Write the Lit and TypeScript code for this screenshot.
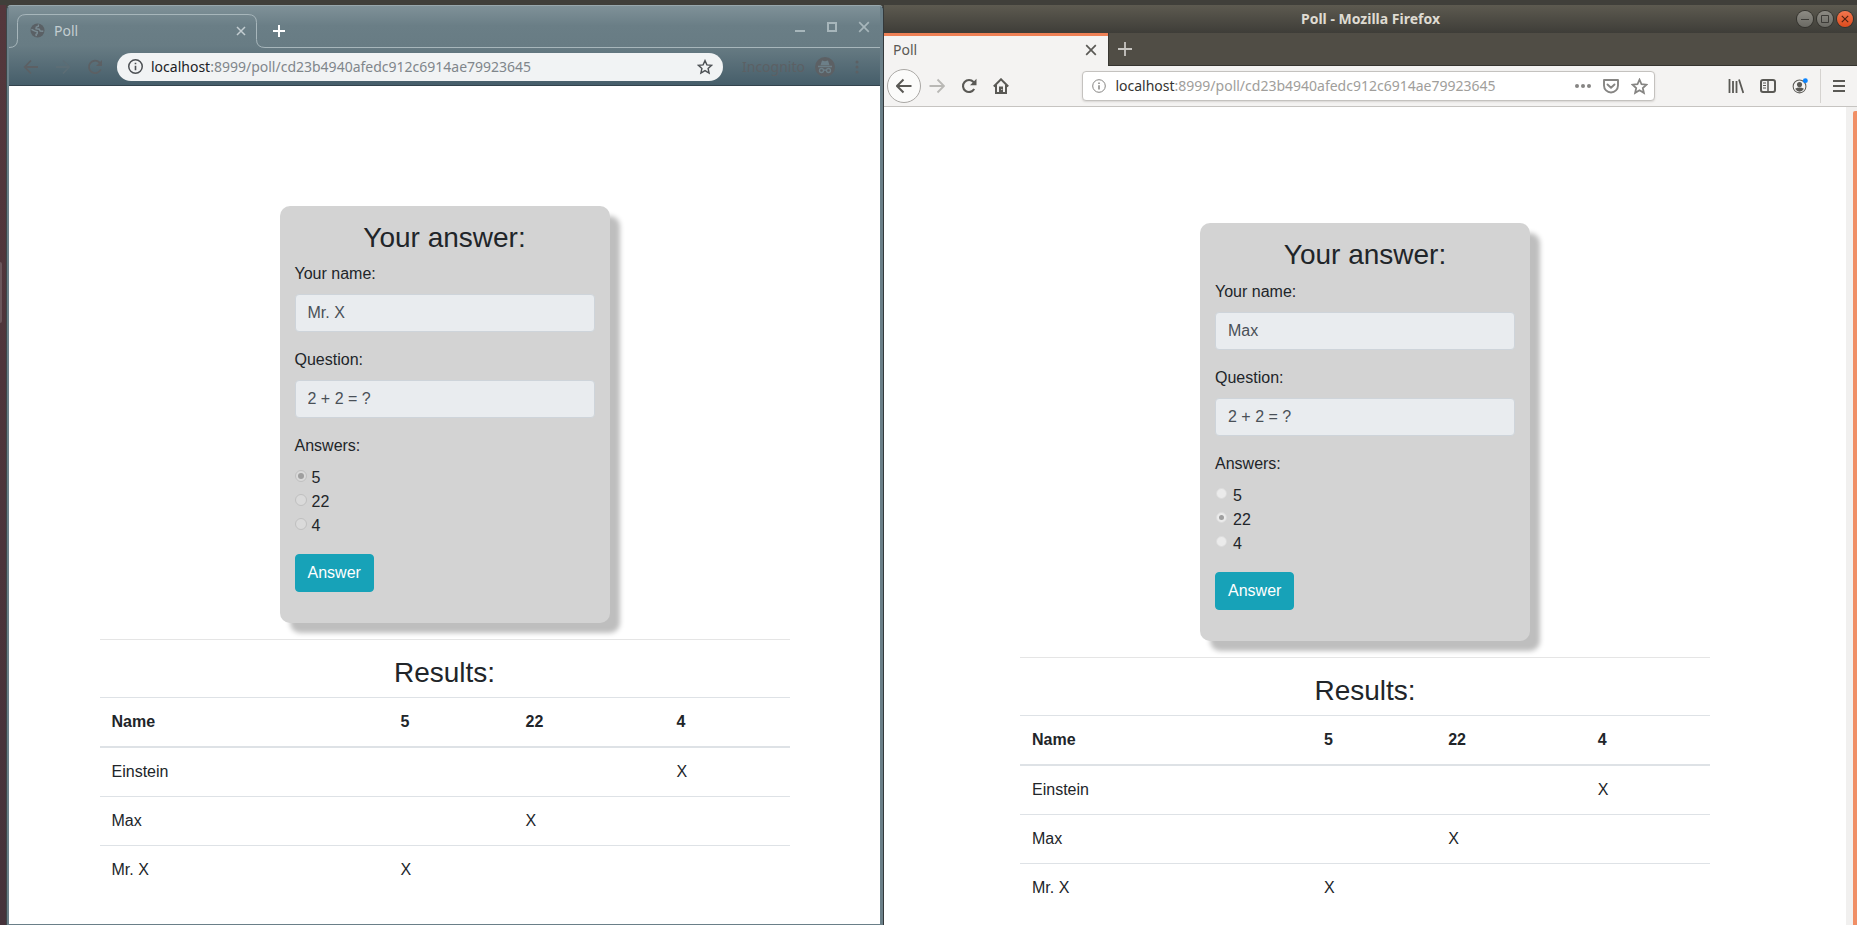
import { LitElement, html, css, svg } from "lit";
import { customElement, property } from "lit/decorators.js";

const ADDRESS_HOST = "localhost";
const ADDRESS_PATH = ":8999/poll/cd23b4940afedc912c6914ae79923645";
const OPTIONS = ["5", "22", "4"];
const RESULTS = [
  { name: "Einstein", pick: "4" },
  { name: "Max", pick: "22" },
  { name: "Mr. X", pick: "5" },
];

const icon = (size: number, box: string, body: unknown) => html`<svg
  width=${size}
  height=${size}
  viewBox=${box}
  fill="none"
  stroke="currentColor"
  aria-hidden="true"
>
  ${body}
</svg>`;

const crossIcon = (size: number, width: number) =>
  icon(size, "0 0 10 10", svg`<path d="M1 1l8 8M9 1l-8 8" stroke-width=${width} />`);

const starIcon = (size: number, width: number) =>
  icon(
    size,
    "0 0 16 16",
    svg`<path d="M8 1.600L9.900 5.900L14.600 6.300L11.100 9.400L12.100 14L8 11.600L3.900 14L4.900 9.400L1.400 6.300L6.100 5.900z" stroke-width=${width} />`
  );

const infoIcon = (size: number, width: number) =>
  icon(
    size,
    "0 0 14 14",
    svg`<circle cx="7" cy="7" r="6.3" stroke-width=${width} /><path d="M7 6.200v4.200M7 3.500v1.500" stroke-width="1.500" />`
  );

@customElement("poll-page")
export class PollPage extends LitElement {
  @property() person = "";
  @property() choice = "";

  static styles = css`
    * {
      box-sizing: border-box;
    }
    :host {
      display: block;
      padding: var(--page-top, 120px) 15px 0;
      background: #fff;
      color: #212529;
      font: 16px/24px "Liberation Sans", Arial, sans-serif;
    }
    .container {
      max-width: 690px;
      margin: 0 auto;
    }
    .card {
      width: 330px;
      margin: 0 auto;
      padding: 15px 15px 31px;
      border-radius: 10px;
      background: #d3d3d3;
      box-shadow: 10px 10px 5px #bebebe;
    }
    .title {
      margin: 0 0 8px;
      font-size: 28px;
      font-weight: 400;
      line-height: 33px;
      text-align: center;
    }
    .card .title {
      line-height: var(--title-line, 33px);
    }
    .group {
      margin: 0 0 16px;
      padding: 0;
      border: 0;
    }
    .caption {
      display: block;
      margin-bottom: 8px;
      padding: 0;
    }
    .field {
      display: block;
      width: 100%;
      height: 38px;
      padding: 6px 12px;
      border: 1px solid #ced4da;
      border-radius: 4px;
      background: #e9ecef;
      color: #495057;
      font: inherit;
    }
    .option {
      display: flex;
      gap: var(--radio-gap, 5px);
    }
    .radio {
      appearance: none;
      display: grid;
      place-items: center;
      width: var(--radio-size, 12px);
      height: var(--radio-size, 12px);
      margin: 4px 0 0 var(--radio-left, 0);
      border: 1px solid var(--radio-line, #c0c0c0);
      border-radius: 50%;
      background: var(--radio-fill, #dadada);
    }
    .radio:checked::before {
      content: "";
      width: var(--dot-size, 6px);
      height: var(--dot-size, 6px);
      border-radius: 50%;
      background: #9f9f9f;
    }
    .submit {
      display: block;
      height: 38px;
      padding: 6px 12px;
      border: 1px solid #17a2b8;
      border-radius: 4px;
      background: #17a2b8;
      color: #fff;
      font: inherit;
    }
    .rule {
      height: 1px;
      margin: 16px 0;
      border: 0;
      background: #e5e5e5;
    }
    .results {
      width: 100%;
      border-spacing: 0;
      text-align: left;
    }
    .cell {
      padding: 12px;
      border-top: 1px solid #dee2e6;
      font-weight: 400;
    }
    .head {
      padding: 12px;
      border-top: 1px solid #dee2e6;
      border-bottom: 2px solid #dee2e6;
      font-weight: 700;
    }
    .head:first-child {
      width: var(--name-column, 289px);
    }
    .first .cell {
      border-top: 0;
    }
  `;

  render() {
    return html`
      <main class="container">
        <form class="card" @submit=${(e: Event) => e.preventDefault()}>
          <h2 class="title">Your answer:</h2>
          <div class="group">
            <label class="caption" for="name">Your name:</label>
            <input class="field" id="name" type="text" .value=${this.person} disabled />
          </div>
          <div class="group">
            <label class="caption" for="question">Question:</label>
            <input class="field" id="question" type="text" .value=${"2 + 2 = ?"} disabled />
          </div>
          <fieldset class="group">
            <legend class="caption">Answers:</legend>
            ${OPTIONS.map(
              (o) => html`<label class="option">
                <input class="radio" type="radio" name="answer" value=${o} ?checked=${o === this.choice} disabled />
                <span>${o}</span>
              </label>`
            )}
          </fieldset>
          <button class="submit" type="submit">Answer</button>
        </form>
        <hr class="rule" />
        <h2 class="title">Results:</h2>
        <table class="results">
          <thead>
            <tr>
              <th class="head" scope="col">Name</th>
              ${OPTIONS.map((o) => html`<th class="head" scope="col">${o}</th>`)}
            </tr>
          </thead>
          <tbody>
            ${RESULTS.map(
              (r, i) => html`<tr class=${i === 0 ? "first" : ""}>
                <th class="cell" scope="row">${r.name}</th>
                ${OPTIONS.map((o) => html`<td class="cell">${o === r.pick ? "X" : ""}</td>`)}
              </tr>`
            )}
          </tbody>
        </table>
      </main>
    `;
  }
}

@customElement("incognito-window")
export class IncognitoWindow extends LitElement {
  static styles = css`
    * {
      box-sizing: border-box;
    }
    :host {
      display: flex;
      flex-direction: column;
      box-sizing: border-box;
      padding: 0 3px 1px 2px;
      border-top: 1px solid #98a7ac;
      border-left: 1px solid #3d4547;
      border-right: 1px solid #34393b;
      border-radius: 5px 5px 0 0;
      background: #6a7f88;
      font: 14px/20px "Noto Sans", sans-serif;
    }
    button {
      display: grid;
      place-items: center;
      padding: 0;
      border: 0;
      background: none;
      color: inherit;
    }
    svg {
      display: block;
    }
    .chrome {
      background: linear-gradient(#7f9198, #6a7e86 25%, #687c84 50%, #465e6a);
      border-bottom: 1px solid #33434d;
    }
    .strip {
      display: flex;
      align-items: flex-end;
      height: 42px;
      color: #a7b6bb;
    }
    .tab {
      display: flex;
      color: #c3cdd1;
      background: none;
    }
    .edge {
      color: #a7b6bb;
    }
    .face {
      display: flex;
      align-items: center;
      width: 222px;
      height: 34px;
      padding: 0 0 2px 4px;
      border-top: 1px solid #a7b6bb;
    }
    .globe {
      color: #5a6065;
    }
    .name {
      flex: 1;
      margin-left: 9px;
    }
    .close {
      width: 14px;
      height: 20px;
    }
    .rest {
      display: flex;
      flex: 1;
      align-items: center;
      height: 42px;
      padding-right: 10px;
      border-bottom: 1px solid #a7b6bb;
    }
    .plus {
      width: 28px;
      height: 28px;
      margin-top: 8px;
      color: #fff;
    }
    .controls {
      display: flex;
      gap: 20px;
      margin: 0 0 0 auto;
    }
    .controls button {
      width: 12px;
      height: 12px;
    }
    .toolbar {
      display: flex;
      align-items: center;
      height: 37px;
      padding: 0 17px 0 12px;
      color: #5c6064;
    }
    .nav {
      display: flex;
      gap: 12px;
      margin-right: 12px;
    }
    .nav button {
      width: 20px;
      height: 28px;
    }
    .nav .off {
      color: #5c6d75;
    }
    .address {
      display: flex;
      flex: 1;
      align-items: center;
      height: 28px;
      padding: 0 10px 0 11px;
      border-radius: 14px;
      background: #f1f3f4;
      color: #4c5054;
    }
    .url {
      flex: 1;
      margin-left: 8px;
      color: #80868b;
    }
    .host {
      color: #202124;
    }
    .mode {
      margin: 0 10px 0 19px;
    }
    .menu {
      width: 12px;
      height: 28px;
      margin-left: 16px;
    }
    .page {
      flex: 1;
      --page-top: 120px;
    }
  `;

  render() {
    return html`
      <header class="chrome">
        <div class="strip">
          <div class="tab">
            <svg class="edge" width="17" height="34" fill="none" stroke="currentColor" aria-hidden="true">
              <path d="M0 33.500Q8.500 33.500 8.500 25.500V8.500Q8.500 .5 17 .5" />
            </svg>
            <div class="face">
              <svg class="globe" width="15" height="15" viewBox="0 0 15 15" aria-hidden="true">
                <circle cx="7.500" cy="7.500" r="7" fill="currentColor" />
                <path d="M8.500 1.500L8.300 3.300L6.300 4L6 5.600L9.300 6.200L10.200 8L13.300 8.300M1.500 6.300L4.500 7.800L7.300 8.800L7.200 10.600L6 11.400L6.300 13.200" fill="none" stroke="#7a8c94" stroke-width="1.400" />
              </svg>
              <span class="name">Poll</span>
              <button class="close" aria-label="Close tab">${crossIcon(10, 1.5)}</button>
            </div>
            <svg class="edge" width="17" height="34" fill="none" stroke="currentColor" aria-hidden="true">
              <path d="M0 .5Q8.500 .5 8.500 8.500V25.500Q8.500 33.500 17 33.500" />
            </svg>
          </div>
          <div class="rest">
            <button class="plus" aria-label="New tab">
              ${icon(12, "0 0 12 12", svg`<path d="M6 0v12M0 6h12" stroke-width="2" />`)}
            </button>
            <div class="controls">
              <button aria-label="Minimize">${icon(12, "0 0 12 12", svg`<path d="M1 10h10" stroke-width="2" />`)}</button>
              <button aria-label="Maximize">${icon(12, "0 0 12 12", svg`<path d="M2 2h8v8H2z" stroke-width="2" />`)}</button>
              <button aria-label="Close">${crossIcon(12, 1.4)}</button>
            </div>
          </div>
        </div>
        <div class="toolbar">
          <nav class="nav">
            <button aria-label="Back">
              ${icon(16, "0 0 16 16", svg`<path d="M15 8H2M8 1.500L1.800 8 8 14.500" stroke-width="1.800" />`)}
            </button>
            <button class="off" aria-label="Forward">
              ${icon(16, "0 0 16 16", svg`<path d="M1 8h13M8 1.500L14.200 8 8 14.500" stroke-width="1.800" />`)}
            </button>
            <button aria-label="Reload">
              ${icon(16, "0 0 16 16", svg`<path d="M13.800 10.500A6.200 6.200 0 1 1 12.500 3.500L14.500 5.800" stroke-width="1.800" /><path d="M15 1v6H9z" fill="currentColor" stroke="none" />`)}
            </button>
          </nav>
          <div class="address">
            ${infoIcon(15, 1.4)}
            <span class="url" role="textbox" aria-label="Address" contenteditable="true"><span class="host">${ADDRESS_HOST}</span>${ADDRESS_PATH}</span>
            <button aria-label="Bookmark">${starIcon(16, 1.4)}</button>
          </div>
          <span class="mode">Incognito</span>
          <svg width="20" height="20" viewBox="0 0 20 20" aria-hidden="true">
            <circle cx="10" cy="10" r="10" fill="#5c6064" />
            <g fill="none" stroke="#6c7f88" stroke-width="1.300">
              <path d="M3 9.500h14M8.300 13.500q1.700-1 3.400 0" />
              <circle cx="6.500" cy="13.500" r="2" />
              <circle cx="13.500" cy="13.500" r="2" />
            </g>
            <path d="M5.500 8.300L7 3.500l3 .8 3-.8 1.500 4.800z" fill="#6c7f88" />
          </svg>
          <button class="menu" aria-label="Menu">
            <svg width="4" height="14" viewBox="0 0 4 14" fill="currentColor" aria-hidden="true">
              <circle cx="2" cy="2" r="1.500" /><circle cx="2" cy="7" r="1.500" /><circle cx="2" cy="12" r="1.500" />
            </svg>
          </button>
        </div>
      </header>
      <poll-page class="page" person="Mr. X" choice="5"></poll-page>
    `;
  }
}

@customElement("firefox-window")
export class FirefoxWindow extends LitElement {
  static styles = css`
    * {
      box-sizing: border-box;
    }
    :host {
      display: flex;
      flex-direction: column;
      background: #fff;
      color: #5a5955;
      font: 14px/20px "Noto Sans", sans-serif;
    }
    button {
      display: grid;
      place-items: center;
      flex: none;
      padding: 0;
      border: 0;
      background: none;
      color: inherit;
    }
    svg {
      display: block;
    }
    .titlebar {
      display: grid;
      grid-template-columns: 1fr auto 1fr;
      align-items: center;
      height: 28px;
      padding: 0 4px;
      background: linear-gradient(#5d5a50, #3e3d38);
      color: #dfdbd2;
    }
    .caption {
      grid-column: 2;
      font-size: 14px;
      font-weight: 700;
    }
    .controls {
      display: flex;
      justify-content: flex-end;
      gap: 4px;
    }
    .round {
      width: 16px;
      height: 16px;
      border-radius: 50%;
      background: linear-gradient(#8d8b84, #6b6a64);
      box-shadow: 0 0 0 1px #34332e;
      color: #3c3b37;
    }
    .round.quit {
      background: linear-gradient(#f3774f, #dd4b1d);
      color: #4d2212;
    }
    .strip {
      display: flex;
      height: 33px;
      background: #504d45;
    }
    .tab {
      display: flex;
      align-items: center;
      width: 224px;
      padding: 0 10px 2px 9px;
      border-top: 3px solid #ee8055;
      background: #f4f3f2;
    }
    .name {
      flex: 1;
    }
    .close {
      width: 14px;
      height: 20px;
    }
    .rest {
      display: flex;
      flex: 1;
      align-items: center;
      padding-left: 9px;
      border-left: 1px solid #3a3833;
      border-bottom: 1px solid #35342f;
      color: #c7c5c1;
    }
    .toolbar {
      display: flex;
      align-items: center;
      height: 41px;
      padding: 0 6px 0 3px;
      border-bottom: 1px solid #c6c4c1;
      background: #f4f3f2;
    }
    .nav {
      display: flex;
      align-items: center;
      gap: 8px;
    }
    .nav button {
      width: 24px;
      height: 32px;
    }
    .nav .back {
      width: 34px;
      height: 34px;
      border: 1px solid #aaa8a5;
      border-radius: 50%;
      background: #fbfbfa;
    }
    .nav .back + button {
      margin-left: -4px;
    }
    .nav .off {
      color: #b9b8b5;
    }
    .space {
      flex: 1;
    }
    .address {
      display: flex;
      flex: 8;
      align-items: center;
      gap: 12px;
      height: 30px;
      padding: 0 6px 0 9px;
      border: 1px solid #c4c2bf;
      border-radius: 4px;
      background: #fff;
      box-shadow: 0 1px 2px #d8d6d3;
      color: #868583;
    }
    .url {
      flex: 1;
      margin-left: -3px;
      color: #a09e9b;
    }
    .host {
      color: #343330;
    }
    .tools {
      display: flex;
      align-items: center;
      gap: 8px;
    }
    .tools button {
      width: 24px;
      height: 32px;
    }
    .divider {
      width: 1px;
      height: 34px;
      margin-right: -2px;
      background: #d5d3d0;
    }
    .view {
      display: flex;
      flex: 1;
    }
    .page {
      flex: 1;
      --page-top: 116px;
      --title-line: 34px;
      --radio-size: 11px;
      --radio-left: 1px;
      --radio-gap: 6px;
      --radio-line: #dcdcdc;
      --radio-fill: #ebebeb;
      --dot-size: 5px;
      --name-column: 292px;
    }
    .scrollbar {
      width: 11px;
      padding: 4px 0 0 7px;
      background: #f1f0ef;
    }
    .thumb {
      height: 100%;
      border-radius: 2px 0 0 0;
      background: #f08f66;
    }
  `;

  render() {
    return html`
      <div class="titlebar">
        <span class="caption">Poll - Mozilla Firefox</span>
        <div class="controls">
          <button class="round" aria-label="Minimize">${icon(10, "0 0 10 10", svg`<path d="M1 5.500h8" />`)}</button>
          <button class="round" aria-label="Maximize">${icon(10, "0 0 10 10", svg`<path d="M1.500 1.500h7v7h-7z" />`)}</button>
          <button class="round quit" aria-label="Close">${crossIcon(8, 1.4)}</button>
        </div>
      </div>
      <div class="strip">
        <div class="tab">
          <span class="name">Poll</span>
          <button class="close" aria-label="Close tab">${crossIcon(12, 1.4)}</button>
        </div>
        <div class="rest">
          <button aria-label="New tab">${icon(14, "0 0 14 14", svg`<path d="M7 0v14M0 7h14" stroke-width="1.800" />`)}</button>
        </div>
      </div>
      <div class="toolbar">
        <nav class="nav">
          <button class="back" aria-label="Back">
            ${icon(16, "0 0 16 16", svg`<path d="M15.500 8H1.500M7.500 1.500L1 8l6.500 6.500" stroke-width="2" />`)}
          </button>
          <button class="off" aria-label="Forward">
            ${icon(16, "0 0 16 16", svg`<path d="M.5 8h14M8.500 1.500L15 8l-6.500 6.500" stroke-width="1.800" />`)}
          </button>
          <button aria-label="Reload">
            ${icon(16, "0 0 16 16", svg`<path d="M13.200 11A6 6 0 1 1 12.500 4L14 5.500" stroke-width="2.100" /><path d="M15.500 .8v6.500H9z" fill="currentColor" stroke="none" />`)}
          </button>
          <button aria-label="Home">
            ${icon(16, "0 0 16 16", svg`<path d="M.8 8.500L8 1.300l7.200 7.200M3 7v8h10V7" stroke-width="2" /><path d="M6 8.500h4V15H6z" fill="currentColor" stroke="none" /><path d="M8.300 11.500h1" stroke="#f4f3f2" />`)}
          </button>
        </nav>
        <div class="space"></div>
        <div class="address">
          ${infoIcon(14, 1)}
          <span class="url" role="textbox" aria-label="Address" contenteditable="true"><span class="host">${ADDRESS_HOST}</span>${ADDRESS_PATH}</span>
          <button aria-label="Page actions">
            <svg width="16" height="16" viewBox="0 0 16 16" fill="currentColor" aria-hidden="true">
              <circle cx="2" cy="8" r="2" /><circle cx="8" cy="8" r="2" /><circle cx="14" cy="8" r="2" />
            </svg>
          </button>
          <button aria-label="Save to Pocket">
            ${icon(16, "0 0 16 16", svg`<path d="M1 2h14v5.500a7 7 0 0 1-14 0zM4.500 6.500L8 9.800l3.500-3.300" stroke-width="1.900" stroke-linecap="round" stroke-linejoin="round" />`)}
          </button>
          <button aria-label="Bookmark">${starIcon(17, 1.7)}</button>
        </div>
        <div class="space"></div>
        <div class="tools">
          <button aria-label="Library">
            ${icon(16, "0 0 16 16", svg`<path d="M1.500 1v14M5 3v12M8.500 3v12M11 1.500L15.300 15" stroke-width="1.800" />`)}
          </button>
          <button aria-label="Sidebars">
            ${icon(16, "0 0 16 16", svg`<rect x="1" y="2" width="14" height="12" rx="2" stroke-width="2" /><path d="M8 2v12" stroke-width="1.500" /><path d="M3 5h3M3 7.500h3M3 10h3" />`)}
          </button>
          <button aria-label="Account">
            ${icon(
              16,
              "0 1 17 17",
              svg`<circle cx="8" cy="10" r="6.800" stroke-width="1.100" /><circle cx="8" cy="8" r="2.700" fill="currentColor" stroke="none" /><path d="M3.300 12.500Q8 9.500 12.700 12.500Q11 15.500 8 15.500T3.300 12.500z" fill="currentColor" stroke="none" /><circle cx="14.200" cy="3.800" r="2.600" fill="#0a84ff" stroke="none" />`
            )}
          </button>
          <span class="divider"></span>
          <button aria-label="Open menu">
            ${icon(14, "0 0 14 14", svg`<path d="M1 2h12M1 7h12M1 12h12" stroke-width="1.900" />`)}
          </button>
        </div>
      </div>
      <div class="view">
        <poll-page class="page" person="Max" choice="22"></poll-page>
        <div class="scrollbar"><div class="thumb"></div></div>
      </div>
    `;
  }
}

@customElement("app-root")
export class AppRoot extends LitElement {
  static styles = css`
    :host {
      display: grid;
      grid-template-columns: 6px 878fr 973fr;
      box-sizing: border-box;
      min-height: 100vh;
      padding-top: 5px;
      background: #403f3a;
    }
    .desktop {
      padding-top: 257px;
      background: linear-gradient(#54373c, #45323a);
    }
    .handle {
      width: 2px;
      height: 61px;
      border-radius: 0 2px 2px 0;
      background: #6b565b;
    }
  `;

  render() {
    return html`
      <div class="desktop"><div class="handle"></div></div>
      <incognito-window></incognito-window>
      <firefox-window></firefox-window>
    `;
  }
}
